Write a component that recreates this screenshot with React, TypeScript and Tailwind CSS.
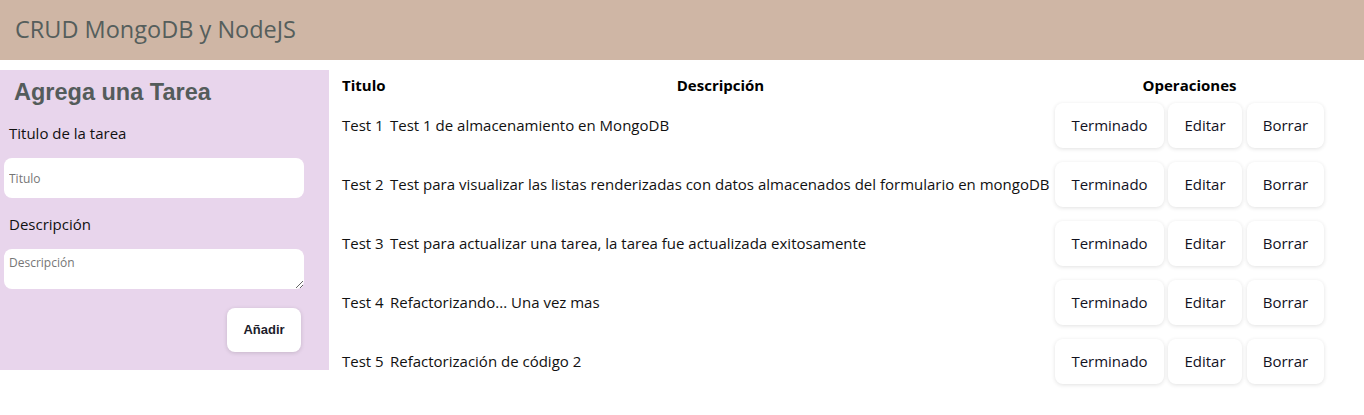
const tareas = [
  { titulo: 'Test 1', descripcion: 'Test 1 de almacenamiento en MongoDB' },
  {
    titulo: 'Test 2',
    descripcion:
      'Test para visualizar las listas renderizadas con datos almacenados del formulario en mongoDB',
  },
  { titulo: 'Test 3', descripcion: 'Test para actualizar una tarea, la tarea fue actualizada exitosamente' },
  { titulo: 'Test 4', descripcion: 'Refactorizando... Una vez mas' },
  { titulo: 'Test 5', descripcion: 'Refactorización de código 2' },
];

const btn =
  'h-[45px] rounded-lg bg-white text-[15px] font-medium text-[#12121f] shadow-[0_1px_4px_rgba(0,0,0,0.12)]';

function Formulario() {
  return (
    <aside className="flex h-[300px] w-[329px] shrink-0 flex-col bg-[#e8d5ec] px-1 pt-2 font-['Open_Sans',sans-serif]">
      <h2 className="ml-[10px] font-['Liberation_Sans',Arial,sans-serif] text-[23.5px] leading-7 font-bold text-[#545c5b]">
        Agrega una Tarea
      </h2>
      <label className="mt-[15px] ml-[5px] text-[15px] leading-6 text-[#111]">Titulo de la tarea</label>
      <input
        type="text"
        placeholder="Titulo"
        className="mt-[13px] h-10 w-[300px] rounded-lg bg-white px-[5px] text-xs outline-none placeholder:text-[#767676]"
      />
      <label className="mt-[14px] ml-[5px] text-[15px] leading-6 text-[#111]">Descripción</label>
      <textarea
        placeholder="Descripción"
        className="mt-[13px] h-10 w-[300px] rounded-lg bg-white px-[5px] pt-[6px] text-xs outline-none placeholder:text-[#767676]"
      />
      <div className="mt-[19px] flex w-[297px] justify-end">
        <button className="h-11 w-[74px] rounded-lg bg-white font-['Liberation_Sans',Arial,sans-serif] text-[13px] font-bold text-[#1c1c2b] shadow-[0_1px_4px_rgba(0,0,0,0.15)]">
          Añadir
        </button>
      </div>
    </aside>
  );
}

function Tabla() {
  return (
    <table className="ml-[13px] table-fixed border-collapse font-['Open_Sans',sans-serif] text-[15px] text-[#111]">
      <colgroup>
        <col className="w-[46px]" />
        <col className="w-[665px]" />
        <col className="w-[273px]" />
      </colgroup>
      <thead>
        <tr className="h-[26px] align-top leading-5">
          <th className="pt-[5px] text-left font-bold text-black">Titulo</th>
          <th className="pt-[5px] text-center font-bold text-black">Descripción</th>
          <th className="pt-[5px] text-center font-bold text-black">Operaciones</th>
        </tr>
      </thead>
      <tbody>
        {tareas.map((t) => (
          <tr key={t.titulo} className="h-[59px]">
            <td className="whitespace-nowrap">{t.titulo}</td>
            <td className="pl-[2px] whitespace-nowrap">{t.descripcion}</td>
            <td>
              <div className="flex gap-1 pl-[2px]">
                <button className={`${btn} w-[109px]`}>Terminado</button>
                <button className={`${btn} w-[74px]`}>Editar</button>
                <button className={`${btn} ml-px w-[77px]`}>Borrar</button>
              </div>
            </td>
          </tr>
        ))}
      </tbody>
    </table>
  );
}

export default function App() {
  return (
    <div className="min-h-[415px] bg-white">
      <header className="flex h-[60px] items-center bg-[#cfb6a5] px-[15px] font-['Open_Sans',sans-serif] text-[23.5px] text-[#555e5c]">
        CRUD MongoDB y NodeJS
      </header>
      <main className="mt-[10px] flex items-start">
        <Formulario />
        <Tabla />
      </main>
    </div>
  );
}
